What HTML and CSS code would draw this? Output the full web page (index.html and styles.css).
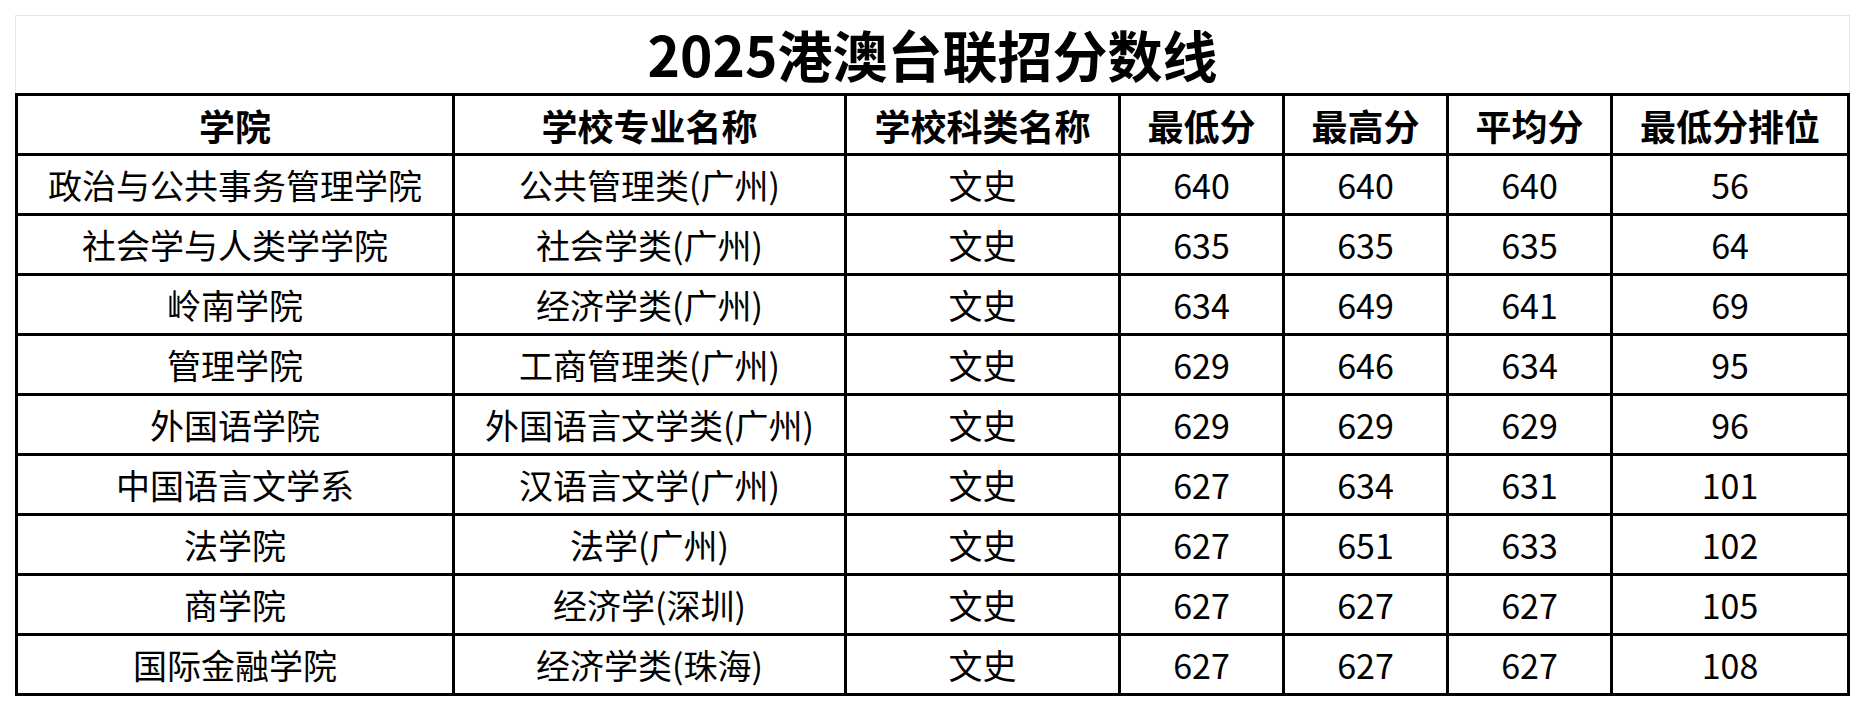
FILE: index.html
```html
<!DOCTYPE html>
<html lang="zh-CN">
<head>
<meta charset="utf-8">
<title>2025港澳台联招分数线</title>
<link rel="stylesheet" href="styles.css">
</head>
<body>
<div class="sheet">
  <div class="title">2025港澳台联招分数线</div>
  <div class="grid">
    <div class="cell head">学院</div>
    <div class="cell head">学校专业名称</div>
    <div class="cell head">学校科类名称</div>
    <div class="cell head">最低分</div>
    <div class="cell head">最高分</div>
    <div class="cell head">平均分</div>
    <div class="cell head">最低分排位</div>

    <div class="cell">政治与公共事务管理学院</div>
    <div class="cell">公共管理类(广州)</div>
    <div class="cell">文史</div>
    <div class="cell">640</div>
    <div class="cell">640</div>
    <div class="cell">640</div>
    <div class="cell">56</div>

    <div class="cell">社会学与人类学学院</div>
    <div class="cell">社会学类(广州)</div>
    <div class="cell">文史</div>
    <div class="cell">635</div>
    <div class="cell">635</div>
    <div class="cell">635</div>
    <div class="cell">64</div>

    <div class="cell">岭南学院</div>
    <div class="cell">经济学类(广州)</div>
    <div class="cell">文史</div>
    <div class="cell">634</div>
    <div class="cell">649</div>
    <div class="cell">641</div>
    <div class="cell">69</div>

    <div class="cell">管理学院</div>
    <div class="cell">工商管理类(广州)</div>
    <div class="cell">文史</div>
    <div class="cell">629</div>
    <div class="cell">646</div>
    <div class="cell">634</div>
    <div class="cell">95</div>

    <div class="cell">外国语学院</div>
    <div class="cell">外国语言文学类(广州)</div>
    <div class="cell">文史</div>
    <div class="cell">629</div>
    <div class="cell">629</div>
    <div class="cell">629</div>
    <div class="cell">96</div>

    <div class="cell">中国语言文学系</div>
    <div class="cell">汉语言文学(广州)</div>
    <div class="cell">文史</div>
    <div class="cell">627</div>
    <div class="cell">634</div>
    <div class="cell">631</div>
    <div class="cell">101</div>

    <div class="cell">法学院</div>
    <div class="cell">法学(广州)</div>
    <div class="cell">文史</div>
    <div class="cell">627</div>
    <div class="cell">651</div>
    <div class="cell">633</div>
    <div class="cell">102</div>

    <div class="cell">商学院</div>
    <div class="cell">经济学(深圳)</div>
    <div class="cell">文史</div>
    <div class="cell">627</div>
    <div class="cell">627</div>
    <div class="cell">627</div>
    <div class="cell">105</div>

    <div class="cell">国际金融学院</div>
    <div class="cell">经济学类(珠海)</div>
    <div class="cell">文史</div>
    <div class="cell">627</div>
    <div class="cell">627</div>
    <div class="cell">627</div>
    <div class="cell">108</div>
  </div>
</div>
</body>
</html>
```

FILE: styles.css
```css
html, body {
  margin: 0;
  padding: 0;
  background: #ffffff;
}

body {
  font-family: "Noto Sans CJK SC", "Microsoft YaHei", "Noto Sans", sans-serif;
  color: #000000;
}

.sheet {
  margin: 15px 0 0 15px;
  width: 1835px;
}

.title {
  box-sizing: border-box;
  height: 78px;
  border: 1px solid #e6e6e6;
  border-bottom: none;
  display: flex;
  align-items: center;
  justify-content: center;
  font-size: 55px;
  font-weight: 700;
  line-height: 1;
  padding-bottom: 2px;
}

.grid {
  display: grid;
  grid-template-columns: 434px 389px 271px 161px 161px 161px 234px;
  grid-auto-rows: 57px;
  gap: 3px;
  padding: 3px;
  background: #000000;
  width: 1835px;
  box-sizing: border-box;
}

.cell {
  background: #ffffff;
  display: flex;
  align-items: center;
  justify-content: center;
  font-size: 34px;
  line-height: 1;
  white-space: nowrap;
}

.head {
  font-size: 36px;
  font-weight: 700;
}
```
